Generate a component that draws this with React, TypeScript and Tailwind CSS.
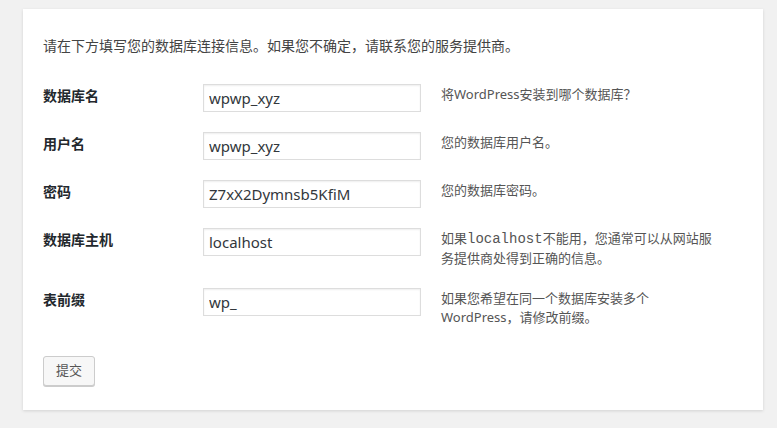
const fields = [
  { label: "数据库名", name: "dbname", value: "wpwp_xyz", desc: <>将WordPress安装到哪个数据库？</> },
  { label: "用户名", name: "uname", value: "wpwp_xyz", desc: <>您的数据库用户名。</> },
  { label: "密码", name: "pwd", value: "Z7xX2Dymnsb5KfiM", desc: <>您的数据库密码。</> },
  {
    label: "数据库主机",
    name: "dbhost",
    value: "localhost",
    desc: (
      <>
        如果<code className="font-['Liberation_Mono',monospace] text-[14px] leading-[19px]">localhost</code>不能用，您通常可以从网站服务提供商处得到正确的信息。
      </>
    ),
  },
  { label: "表前缀", name: "prefix", value: "wp_", desc: <>如果您希望在同一个数据库安装多个WordPress，请修改前缀。</> },
];

export default function App() {
  return (
    <div className="min-h-[428px] bg-[#f1f1f1] pt-[9px] pl-[23px] font-['Noto_Sans','Noto_Sans_CJK_SC',sans-serif] text-[#444]">
      <div className="w-[740px] bg-white px-5 pt-[27px] pb-[24px] shadow-[0_1px_3px_rgba(0,0,0,0.13)]">
        <p className="text-[14px] leading-[19px]">请在下方填写您的数据库连接信息。如果您不确定，请联系您的服务提供商。</p>
        <table className="mt-[19px] border-collapse">
          <tbody>
            {fields.map((f) => (
              <tr key={f.name}>
                <th className="w-[160px] pt-[12px] pb-[10px] text-left align-top text-[14px] leading-[19px] font-bold text-[#23282d]">
                  {f.label}
                </th>
                <td className="py-[10px] align-top">
                  <input
                    name={f.name}
                    defaultValue={f.value}
                    className="h-[28px] w-[218px] border border-[#ddd] bg-white px-[5px] text-[15px] text-[#32373c] shadow-[inset_0_1px_2px_rgba(0,0,0,0.07)] outline-none"
                  />
                </td>
                <td className="w-[300px] pt-[11px] pb-[10px] pl-5 align-top text-[13px] leading-[19px] text-[#555]">
                  {f.desc}
                </td>
              </tr>
            ))}
          </tbody>
        </table>
        <button className="mt-[19px] h-[30px] w-[52px] rounded-[3px] border border-[#ccc] bg-[#f7f7f7] text-[13px] text-[#555] shadow-[0_1px_0_#ccc]">
          提交
        </button>
      </div>
    </div>
  );
}
